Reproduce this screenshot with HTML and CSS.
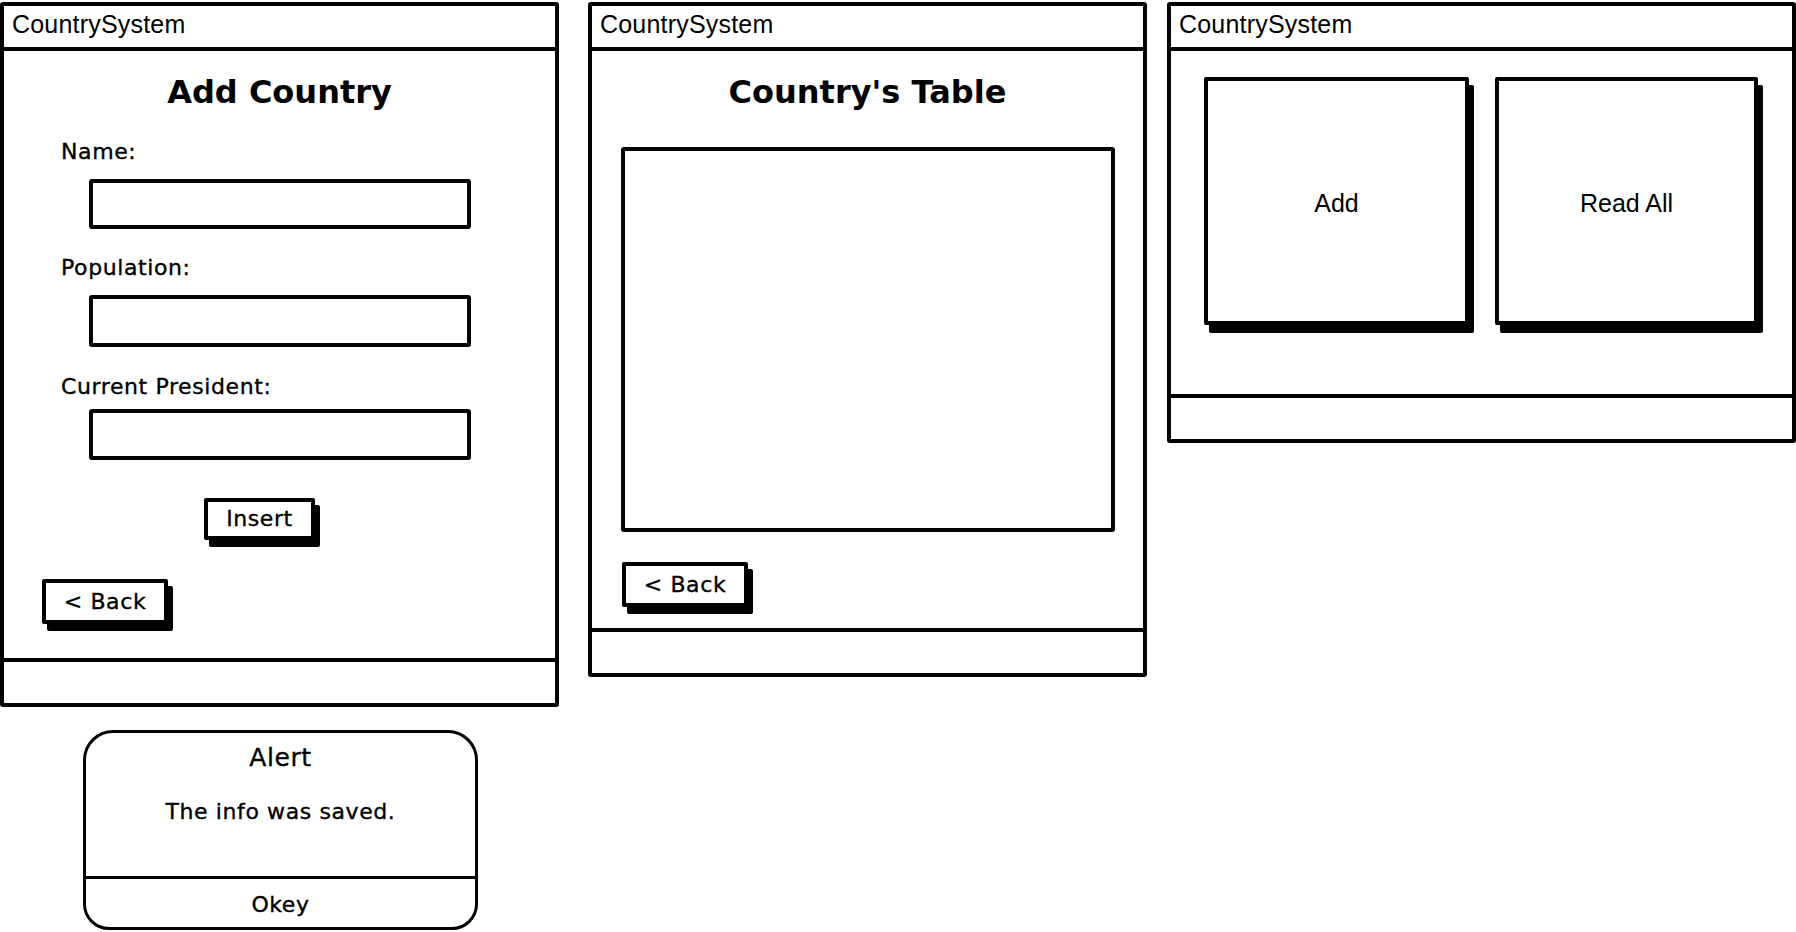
FILE: index.html
```html
<!DOCTYPE html>
<html lang="en">
<head>
<meta charset="utf-8">
<title>CountrySystem wireframes</title>
<link rel="stylesheet" href="styles.css">
</head>
<body>
<div class="board">
  <div class="col-first">
    <section class="window win-add">
      <header class="win-title">CountrySystem</header>
      <div class="win-body">
        <h1 class="heading">Add Country</h1>
        <div class="label label-name">Name:</div>
        <div class="field field-name"></div>
        <div class="label label-pop">Population:</div>
        <div class="field field-pop"></div>
        <div class="label label-pres">Current President:</div>
        <div class="field field-pres"></div>
        <div class="btn btn-insert">Insert</div>
        <div class="btn btn-back btn-back-add">&lt; Back</div>
      </div>
      <footer class="win-foot"></footer>
    </section>
    <div class="alert">
      <div class="alert-main">
        <div class="alert-title">Alert</div>
        <div class="alert-msg">The info was saved.</div>
      </div>
      <div class="alert-action">Okey</div>
    </div>
  </div>

  <section class="window win-table">
    <header class="win-title">CountrySystem</header>
    <div class="win-body">
      <h1 class="heading">Country's Table</h1>
      <div class="table-box"></div>
      <div class="btn btn-back btn-back-table">&lt; Back</div>
    </div>
    <footer class="win-foot"></footer>
  </section>

  <section class="window win-menu">
    <header class="win-title">CountrySystem</header>
    <div class="win-body menu-body">
      <div class="card card-add">Add</div>
      <div class="card card-read">Read All</div>
    </div>
    <footer class="win-foot"></footer>
  </section>
</div>
</body>
</html>
```

FILE: styles.css
```css
* { box-sizing: border-box; }

html, body {
  margin: 0;
  padding: 0;
  background: #fff;
  color: #000;
}

body {
  font-family: "DejaVu Sans", "Liberation Sans", sans-serif;
}

.board {
  display: flex;
  align-items: flex-start;
  padding-top: 2px;
}

.col-first {
  display: flex;
  flex-direction: column;
  width: 559px;
}

.window {
  display: flex;
  flex-direction: column;
  border: 4px solid #000;
  border-radius: 3px;
  background: #fff;
}

.win-add { width: 559px; height: 705px; }
.win-table { width: 559px; height: 675px; margin-left: 29px; }
.win-menu { width: 629px; height: 441px; margin-left: 20px; }

.win-title {
  font-family: "Liberation Sans", Arial, sans-serif;
  font-size: 25px;
  letter-spacing: 0.2px;
  line-height: 37px;
  height: 45px;
  padding: 0 0 4px 8px;
  border-bottom: 4px solid #000;
}

.win-body {
  flex: 1;
  display: flex;
  flex-direction: column;
  align-items: flex-start;
  padding-top: 22px;
}

.win-foot {
  height: 45px;
  border-top: 4px solid #000;
}

.heading {
  margin: 0;
  align-self: stretch;
  text-align: center;
  font-family: "DejaVu Sans", sans-serif;
  font-weight: bold;
  font-size: 32px;
  line-height: 38px;
  height: 38px;
}

.label,
.btn,
.alert-title,
.alert-msg,
.alert-action {
  -webkit-text-stroke: 0.35px #000;
}

.label {
  font-size: 22px;
  letter-spacing: 0.6px;
  line-height: 26px;
  margin-left: 57px;
}

.label-name { margin-top: 28px; margin-bottom: 14px; }
.label-pop { margin-bottom: 14px; }
.label-pres { margin-bottom: 9px; }

.field {
  width: 382px;
  height: 50px;
  margin-left: 85px;
  border: 4px solid #000;
  border-radius: 3px;
}

.field-name { margin-bottom: 26px; }
.field-pop { margin-bottom: 27px; height: 52px; }
.field-pres { margin-bottom: 24px; height: 51px; }

.btn {
  display: flex;
  align-items: center;
  justify-content: center;
  border: 4px solid #000;
  border-radius: 2px;
  background: #fff;
  box-shadow: 5px 7px 0 #000;
  font-size: 22px;
  letter-spacing: 0.6px;
  line-height: 26px;
}

.btn-insert {
  width: 111px;
  height: 42px;
  margin-left: 200px;
  margin-top: 14px;
}

.btn-back {
  width: 126px;
  height: 45px;
}

.btn-back-add {
  margin-left: 38px;
  margin-top: 39px;
}

.table-box {
  width: 494px;
  height: 385px;
  margin-left: 29px;
  margin-top: 36px;
  border: 4px solid #000;
  border-radius: 3px;
}

.btn-back-table {
  margin-left: 30px;
  margin-top: 30px;
}

.menu-body {
  flex-direction: row;
  padding-top: 26px;
  padding-left: 33px;
  gap: 26px;
}

.card {
  display: flex;
  align-items: center;
  justify-content: center;
  height: 248px;
  padding-top: 5px;
  border: 4px solid #000;
  border-radius: 2px;
  background: #fff;
  box-shadow: 5px 8px 0 #000;
  font-family: "Liberation Sans", Arial, sans-serif;
  font-size: 25px;
}

.card-add { width: 265px; }
.card-read { width: 263px; }

.alert {
  display: flex;
  flex-direction: column;
  width: 395px;
  height: 200px;
  margin-top: 23px;
  margin-left: 83px;
  border: 3px solid #000;
  border-radius: 30px 30px 26px 26px;
  background: #fff;
}

.alert-main {
  flex: 1;
  display: flex;
  flex-direction: column;
  align-items: center;
  padding-top: 10px;
}

.alert-title {
  font-size: 25px;
  letter-spacing: 0.6px;
  line-height: 30px;
}

.alert-msg {
  margin-top: 26px;
  font-size: 22px;
  letter-spacing: 0.6px;
  line-height: 26px;
}

.alert-action {
  height: 51px;
  padding-top: 13px;
  border-top: 3px solid #000;
  text-align: center;
  font-size: 22px;
  letter-spacing: 0.6px;
  line-height: 26px;
}
```
